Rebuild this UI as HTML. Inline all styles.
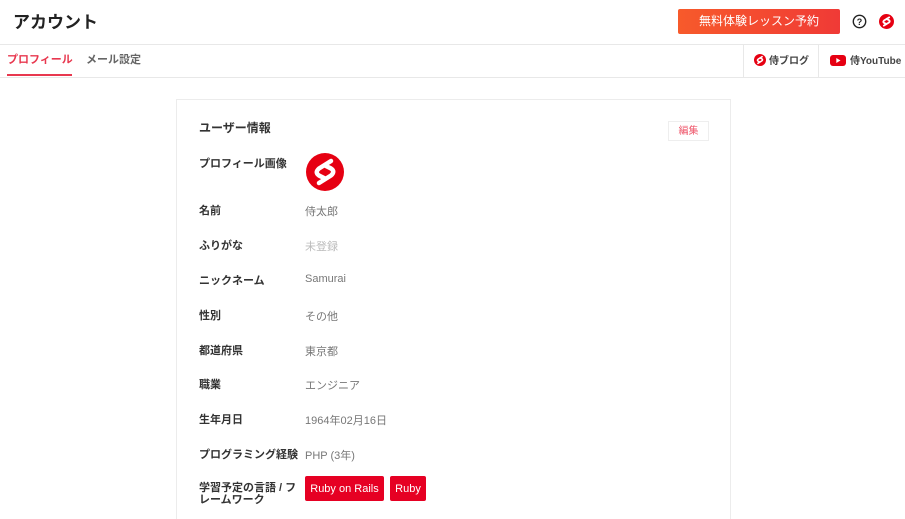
<!DOCTYPE html>
<html><head><meta charset="utf-8"><style>
*{margin:0;padding:0;box-sizing:border-box}
body{width:905px;height:512px;overflow:hidden;background:#fff;font-family:"Liberation Sans","Noto Sans CJK JP",sans-serif;position:relative;color:#333}
.a{position:absolute;white-space:nowrap}
.lbl{position:absolute;left:199px;font-size:11px;font-weight:bold;color:#333}
.val{position:absolute;left:305px;font-size:11px;color:#777}
</style></head><body>
<div class="a" style="left:13px;top:8px;font-size:17px;font-weight:bold;color:#222">アカウント</div>
<div class="a" style="left:678px;top:9px;width:162px;height:25px;background:linear-gradient(90deg,#f75a2b,#f03a36);border-radius:2px;color:#fff;font-size:12px;text-align:center;line-height:25px">無料体験レッスン予約</div>
<svg class="a" style="left:852px;top:14px" width="15" height="15" viewBox="0 0 15 15"><circle cx="7.5" cy="7.5" r="6.2" fill="none" stroke="#222" stroke-width="1.4"/><text x="7.5" y="11" font-size="9" font-weight="bold" text-anchor="middle" fill="#222" font-family="Liberation Sans">?</text></svg>
<svg class="a" style="left:879px;top:14px" width="15" height="15" viewBox="0 0 40 40"><circle cx="20" cy="20" r="20" fill="#e60012"/><path d="M27 9 L14 17 Q9 21 14 24 L20 27 M13 31 L26 23 Q31 19 26 16 L20 13" fill="none" stroke="#fff" stroke-width="5" stroke-linecap="round"/></svg>
<div class="a" style="left:0;top:44px;width:905px;height:1px;background:#e8e8e8"></div>
<div class="a" style="left:0;top:77px;width:905px;height:1px;background:#e8e8e8"></div>
<div class="a" style="left:7px;top:51px;font-size:11px;font-weight:bold;color:#e8384f">プロフィール</div>
<div class="a" style="left:7px;top:74px;width:65px;height:2px;background:#e8384f"></div>
<div class="a" style="left:86px;top:51px;font-size:11px;font-weight:bold;color:#666">メール設定</div>
<div class="a" style="left:743px;top:45px;width:1px;height:32px;background:#e8e8e8"></div>
<div class="a" style="left:818px;top:45px;width:1px;height:32px;background:#e8e8e8"></div>
<svg class="a" style="left:754px;top:54px" width="12" height="12" viewBox="0 0 40 40"><circle cx="20" cy="20" r="20" fill="#e60012"/><path d="M27 9 L14 17 Q9 21 14 24 L20 27 M13 31 L26 23 Q31 19 26 16 L20 13" fill="none" stroke="#fff" stroke-width="5" stroke-linecap="round"/></svg>
<div class="a" style="left:769px;top:52px;font-size:10px;font-weight:bold;color:#444">侍ブログ</div>
<svg class="a" style="left:830px;top:55px" width="16" height="11" viewBox="0 0 16 11"><rect width="16" height="11" rx="3" fill="#e60012"/><path d="M6.3 3 L10.5 5.5 L6.3 8Z" fill="#fff"/></svg>
<div class="a" style="left:850px;top:52px;font-size:10px;font-weight:bold;color:#444">侍YouTube</div>
<div class="a" style="left:176px;top:99px;width:555px;height:420px;border:1px solid #ececec;border-bottom:none"></div>
<div class="a" style="left:199px;top:119px;font-size:12px;font-weight:bold;color:#333">ユーザー情報</div>
<div class="a" style="left:668px;top:121px;width:41px;height:20px;border:1px solid #eee;color:#ef5a6e;font-size:10px;text-align:center;line-height:19px">編集</div>
<div class="lbl" style="top:155px">プロフィール画像</div>
<svg class="a" style="left:305px;top:152px" width="40" height="40" viewBox="0 0 40 40"><circle cx="20" cy="20" r="19" fill="#e60012"/><path d="M26 9 L14 16.5 Q9.5 20.5 14 23.5 L20 26.5 M14 31 L26 23.5 Q30.5 19.5 26 16.5 L20 13.5" fill="none" stroke="#fff" stroke-width="4.5" stroke-linecap="round"/></svg>
<div class="lbl" style="top:202px">名前</div><div class="val" style="top:203px">侍太郎</div>
<div class="lbl" style="top:237px">ふりがな</div><div class="val" style="top:238px;color:#bbb">未登録</div>
<div class="lbl" style="top:272px">ニックネーム</div><div class="val" style="top:273px">Samurai</div>
<div class="lbl" style="top:307px">性別</div><div class="val" style="top:308px">その他</div>
<div class="lbl" style="top:342px">都道府県</div><div class="val" style="top:343px">東京都</div>
<div class="lbl" style="top:376px">職業</div><div class="val" style="top:377px">エンジニア</div>
<div class="lbl" style="top:411px">生年月日</div><div class="val" style="top:412px">1964年02月16日</div>
<div class="lbl" style="top:446px">プログラミング経験</div><div class="val" style="top:447px">PHP (3年)</div>
<div class="lbl" style="top:482px;line-height:12px">学習予定の言語 / フ<br>レームワーク</div>
<div class="a" style="left:305px;top:476px;width:79px;height:25px;background:#e60023;border-radius:2px;color:#fff;font-size:11px;line-height:27px;text-align:center">Ruby on Rails</div>
<div class="a" style="left:390px;top:476px;width:36px;height:25px;background:#e60023;border-radius:2px;color:#fff;font-size:11px;line-height:27px;text-align:center">Ruby</div>
</body></html>
